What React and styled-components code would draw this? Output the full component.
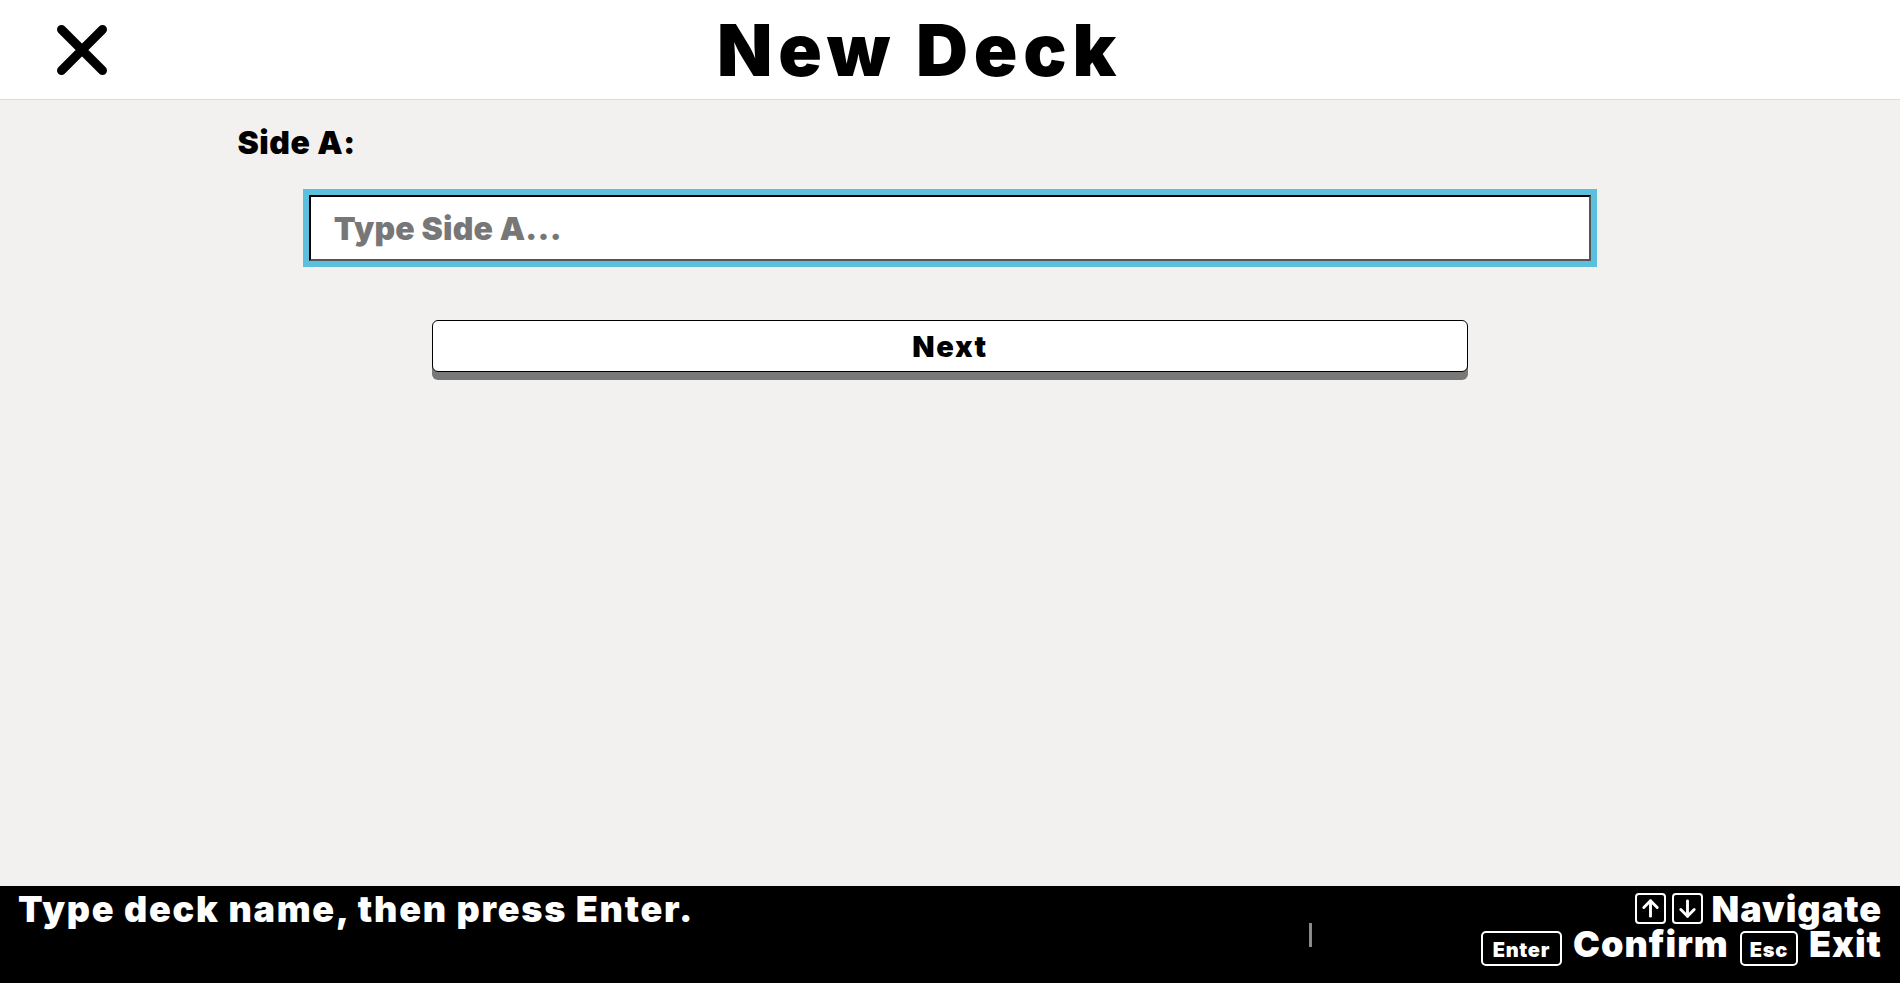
import React from "react";
import styled, { createGlobalStyle } from "styled-components";

const Global = createGlobalStyle`
  html, body { margin: 0; padding: 0; }
  body {
    font-family: Inter, "Noto Sans", "Liberation Sans", sans-serif;
    font-weight: 900;
    background: #f2f1ef;
  }
  * { box-sizing: border-box; }
`;

const Page = styled.div`
  display: flex;
  flex-direction: column;
  min-height: 100vh;
`;

const Header = styled.header`
  display: flex;
  align-items: center;
  height: 100px;
  background: #fff;
  border-bottom: 1px solid #dcdcdc;
  padding-left: 57px;
`;

const CloseButton = styled.button`
  display: flex;
  align-items: center;
  justify-content: center;
  width: 50px;
  height: 50px;
  padding: 0;
  margin: 0;
  border: none;
  background: transparent;
  cursor: pointer;
`;

const Title = styled.h1`
  flex: 1;
  margin: 0;
  padding-right: 168px;
  text-align: center;
  font-size: 72px;
  line-height: 99px;
  font-weight: 900;
  letter-spacing: 5.8px;
  color: #000;
`;

const Main = styled.main`
  flex: 1;
  width: 75%;
  margin: 0 auto;
  padding-top: 23px;
  display: flex;
  flex-direction: column;
`;

const Label = styled.label`
  font-size: 32px;
  line-height: 40px;
  letter-spacing: 0.5px;
  color: #000;
  margin-bottom: 32px;
`;

const TextInput = styled.input`
  align-self: center;
  width: 90%;
  height: 66px;
  padding: 0 23px;
  font-family: inherit;
  font-weight: 900;
  font-size: 32px;
  letter-spacing: 0.2px;
  color: #000;
  background: #fff;
  border: 2px solid;
  border-color: #000 #555 #555 #000;
  outline: 6px solid #5bc0de;
  outline-offset: 0;
  &::placeholder { color: #777; }
`;

const NextButton = styled.button`
  align-self: center;
  width: 1036px;
  height: 52px;
  margin-top: 59px;
  font-family: inherit;
  font-weight: 900;
  font-size: 29px;
  letter-spacing: 1.6px;
  color: #000;
  background: #fff;
  border: 1.5px solid #000;
  border-radius: 6px;
  box-shadow: 0 8px 0 #787878;
  cursor: pointer;
`;

const Footer = styled.footer`
  display: flex;
  align-items: flex-start;
  height: 97px;
  background: #000;
  color: #fff;
  padding: 6px 18px 0 18px;
`;

const Hint = styled.div`
  font-size: 36px;
  line-height: 35px;
  letter-spacing: 1.7px;
`;

const Middle = styled.div`
  flex: 1;
  display: flex;
  justify-content: flex-end;
  padding-right: 169px;
  padding-top: 31px;
`;

const Caret = styled.span`
  display: block;
  width: 3px;
  height: 24px;
  background: #8a8a8a;
`;

const Legend = styled.div`
  display: flex;
  flex-direction: column;
  align-items: flex-end;
`;

const LegendRow = styled.div`
  display: flex;
  align-items: ${(p) => (p.$end ? "flex-end" : "baseline")};
  gap: ${(p) => p.$gap || 10}px;
  font-size: 36px;
  line-height: 35px;
  letter-spacing: 1px;
`;

const ArrowKey = styled.span`
  display: flex;
  align-items: center;
  justify-content: center;
  width: 31px;
  height: 31px;
  margin-bottom: 3px;
  border: 2px solid #fff;
  border-radius: 4px;
`;

const Keys = styled.span`
  display: flex;
  gap: 6px;
`;

const Kbd = styled.span`
  display: inline-block;
  height: 35px;
  padding: 6px ${(p) => p.$px || 10}px 2px;
  font-size: 20px;
  line-height: 23px;
  letter-spacing: 0.7px;
  border: 2px solid #fff;
  border-radius: 5px;
`;

const XIcon = () => (
  <svg width="50" height="50" viewBox="0 0 50 50">
    <path
      d="M4.5 4.5 L45.5 45.5 M45.5 4.5 L4.5 45.5"
      stroke="#000"
      strokeWidth="9"
      strokeLinecap="round"
    />
  </svg>
);

const Arrow = ({ down }) => (
  <svg
    width="23"
    height="23"
    viewBox="0 0 24 24"
    fill="none"
    stroke="#fff"
    strokeWidth="3"
    strokeLinecap="round"
    strokeLinejoin="round"
    style={down ? { transform: "rotate(180deg)" } : undefined}
  >
    <path d="M12 20V4" />
    <path d="M5 11l7-7 7 7" />
  </svg>
);

export default function App() {
  return (
    <>
      <Global />
      <Page>
        <Header>
          <CloseButton aria-label="Close">
            <XIcon />
          </CloseButton>
          <Title>New Deck</Title>
        </Header>
        <Main>
          <Label htmlFor="sideA">Side A:</Label>
          <TextInput id="sideA" placeholder="Type Side A..." />
          <NextButton>Next</NextButton>
        </Main>
        <Footer>
          <Hint>Type deck name, then press Enter.</Hint>
          <Middle>
            <Caret />
          </Middle>
          <Legend>
            <LegendRow $end $gap={8}>
              <Keys>
                <ArrowKey>
                  <Arrow />
                </ArrowKey>
                <ArrowKey>
                  <Arrow down />
                </ArrowKey>
              </Keys>
              <span>Navigate</span>
            </LegendRow>
            <LegendRow $gap={11}>
              <Kbd>Enter</Kbd>
              <span>Confirm</span>
              <Kbd $px={8}>Esc</Kbd>
              <span>Exit</span>
            </LegendRow>
          </Legend>
        </Footer>
      </Page>
    </>
  );
}
